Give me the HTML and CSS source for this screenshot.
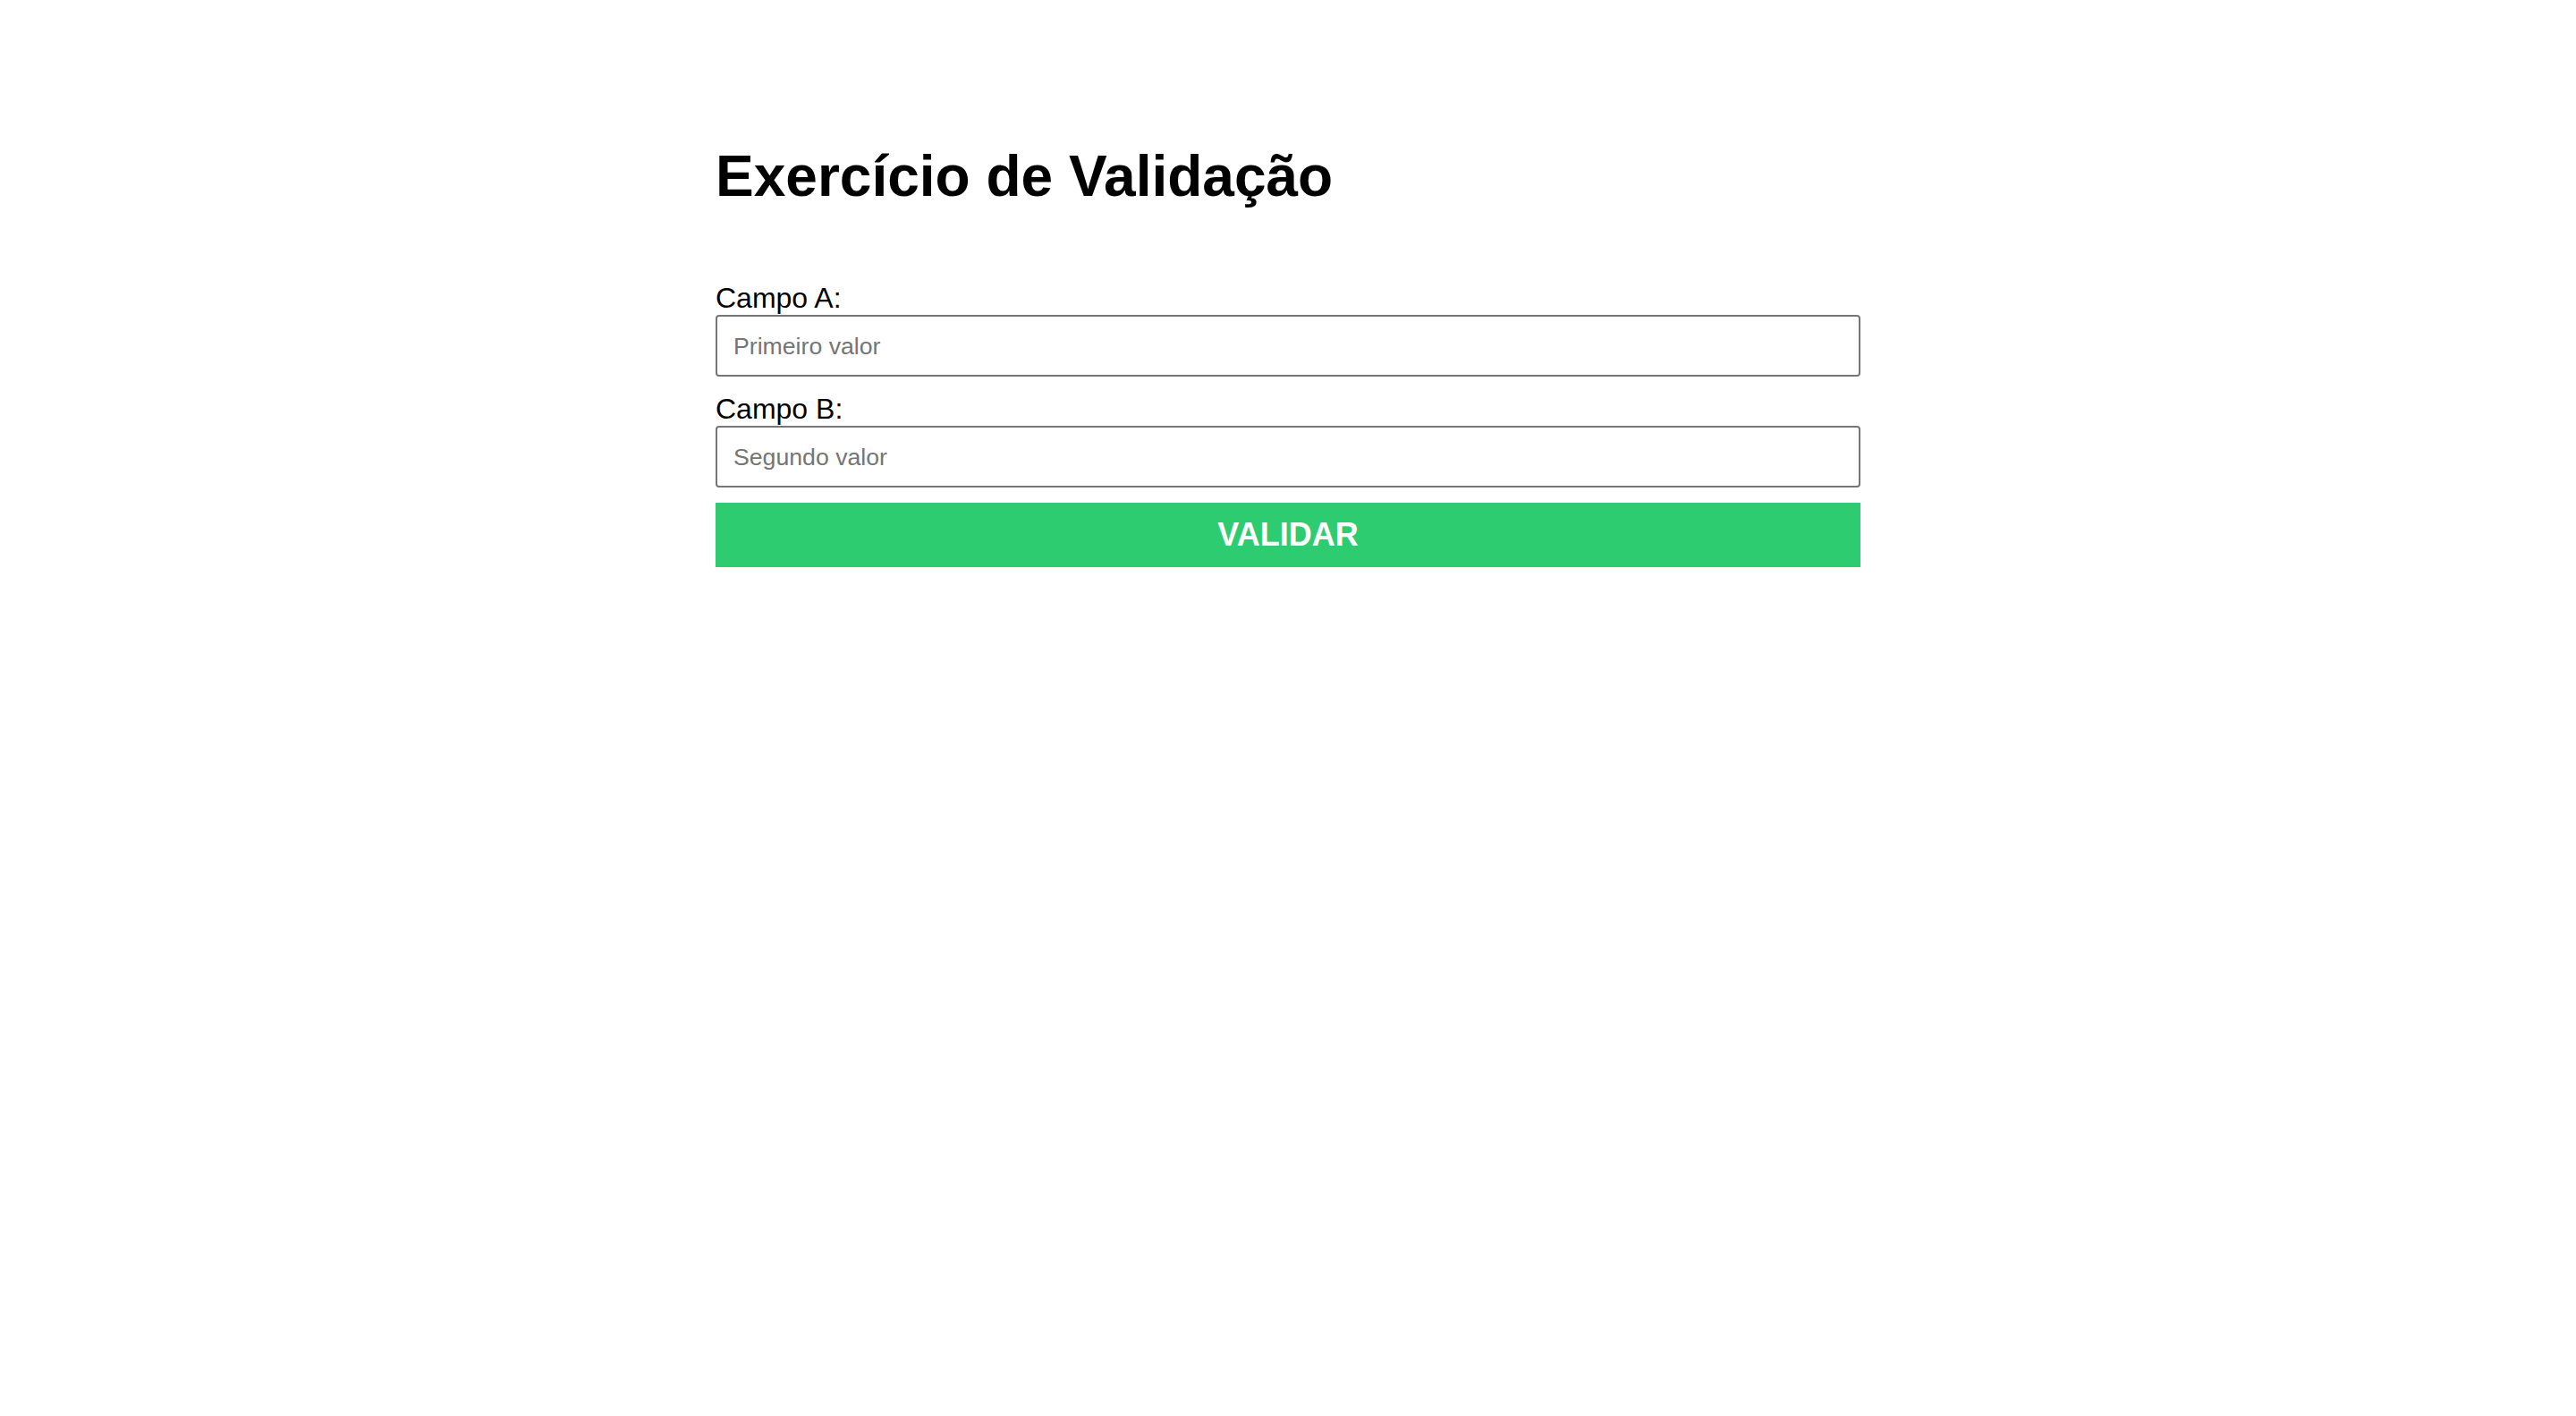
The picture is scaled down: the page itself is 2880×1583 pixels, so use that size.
FILE: index.html
```html
<!DOCTYPE html>
<html lang="pt-BR">
<head>
<meta charset="utf-8">
<title>Exercício de Validação</title>
<link rel="stylesheet" href="styles.css">
</head>
<body>
<main class="container">
  <h1 class="title">Exercício de Validação</h1>
  <form class="form">
    <div class="field">
      <label class="label" for="a">Campo A:</label>
      <input class="input" id="a" type="text" placeholder="Primeiro valor">
    </div>
    <div class="field">
      <label class="label" for="b">Campo B:</label>
      <input class="input" id="b" type="text" placeholder="Segundo valor">
    </div>
    <button class="button" type="button">VALIDAR</button>
  </form>
</main>
</body>
</html>
```

FILE: styles.css
```css
html, body {
  margin: 0;
  padding: 0;
  background: #ffffff;
}

body {
  font-family: "Liberation Sans", Arial, Helvetica, sans-serif;
  color: #000000;
}

.container {
  width: 1280px;
  margin: 0 auto;
  padding-top: 160px;
}

.title {
  margin: 0 0 80px 0;
  font-size: 64px;
  line-height: 74px;
  font-weight: 700;
}

.form {
  display: flex;
  flex-direction: column;
  gap: 17px;
}

.field {
  display: flex;
  flex-direction: column;
}

.label {
  display: block;
  font-size: 32px;
  line-height: 38px;
}

.input {
  box-sizing: border-box;
  width: 100%;
  height: 69px;
  margin: 0;
  padding: 2px 18px 0 18px;
  border: 2px solid #767676;
  border-radius: 4px;
  font-family: "Liberation Sans", Arial, Helvetica, sans-serif;
  font-size: 26.67px;
  color: #000000;
  background: #ffffff;
  outline: none;
}

.input::placeholder {
  color: #757575;
  opacity: 1;
}

.button {
  box-sizing: border-box;
  width: 100%;
  height: 72px;
  margin: 0;
  padding: 0;
  border: none;
  background: #2ecc71;
  color: #ffffff;
  font-family: "Liberation Sans", Arial, Helvetica, sans-serif;
  font-size: 36px;
  font-weight: 700;
  cursor: pointer;
}
```
